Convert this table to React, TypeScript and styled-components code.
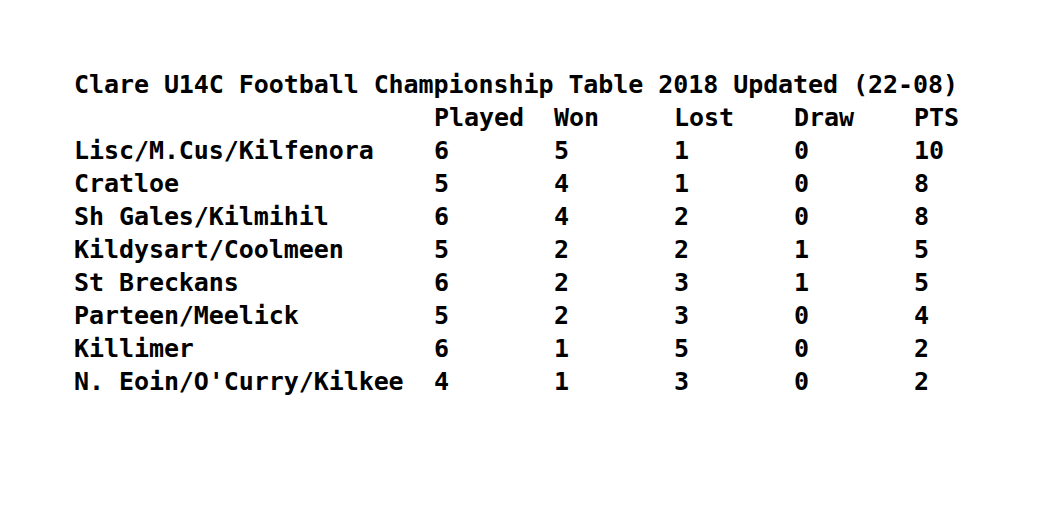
import React from "react";
import styled, { createGlobalStyle } from "styled-components";

const GlobalStyle = createGlobalStyle`
  html, body { margin: 0; padding: 0; background: #ffffff; }
  body { width: 1037px; height: 527px; overflow: hidden; }
`;

const Page = styled.div`
  padding: 68px 0 0 74px;
  font-family: "DejaVu Sans Mono", "Liberation Mono", monospace;
  font-weight: bold;
  font-size: 25px;
  letter-spacing: -0.07px;
  color: #000000;
`;

const Title = styled.div`
  line-height: 33px;
  height: 33px;
  white-space: pre;
`;

const Table = styled.div`
  display: grid;
  grid-template-columns: 360px 120px 120px 120px 120px 120px;
  grid-auto-rows: 33px;
  line-height: 33px;
`;

const Cell = styled.div`
  white-space: pre;
`;

const headers = ["", "Played", "Won", "Lost", "Draw", "PTS"];

const rows: [string, number, number, number, number, number][] = [
  ["Lisc/M.Cus/Kilfenora", 6, 5, 1, 0, 10],
  ["Cratloe", 5, 4, 1, 0, 8],
  ["Sh Gales/Kilmihil", 6, 4, 2, 0, 8],
  ["Kildysart/Coolmeen", 5, 2, 2, 1, 5],
  ["St Breckans", 6, 2, 3, 1, 5],
  ["Parteen/Meelick", 5, 2, 3, 0, 4],
  ["Killimer", 6, 1, 5, 0, 2],
  ["N. Eoin/O'Curry/Kilkee", 4, 1, 3, 0, 2],
];

export default function App() {
  return (
    <>
      <GlobalStyle />
      <Page>
        <Title>Clare U14C Football Championship Table 2018 Updated (22-08)</Title>
        <Table>
          {headers.map((h, i) => (
            <Cell key={"h" + i}>{h}</Cell>
          ))}
          {rows.map((r) =>
            r.map((v, j) => <Cell key={r[0] + j}>{String(v)}</Cell>)
          )}
        </Table>
      </Page>
    </>
  );
}
